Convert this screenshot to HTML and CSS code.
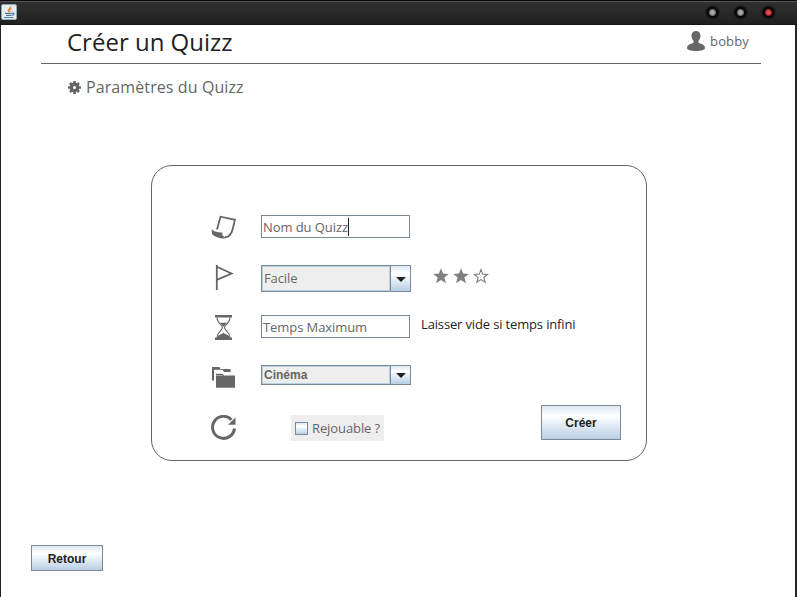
FILE: index.html
```html
<!DOCTYPE html>
<html lang="fr">
<head>
<meta charset="utf-8">
<title>Quizz</title>
<link rel="stylesheet" href="styles.css">
</head>
<body>
<div class="window">
  <div class="titlebar">
    <svg class="java" width="16" height="16" viewBox="0 0 16 16">
      <rect x=".5" y=".5" width="15" height="15" rx="1.5" fill="#e6edf1" stroke="#8fa9b9"/>
      <path d="M9.8 2.2C10.3 4 6 4.700 7.600 8M10.500 4.300C7.500 5.600 9.800 6.500 8.300 8.200" fill="none" stroke="#ee8630" stroke-width="1.200"/>
      <path d="M4 9.300H11M5 11.300H10.500M3 13.500H12.500M11 9.300c3-1 2.500 1.700 0 2" fill="none" stroke="#547d9c" stroke-width="1.200"/>
    </svg>
    <div class="controls"><i class="orb"></i><i class="orb"></i><i class="orb close"></i></div>
  </div>
  <main class="content">
    <header class="header">
      <h1>Créer un Quizz</h1>
      <div class="user">
        <svg width="18" height="20" viewBox="0 0 18 20"><path fill="#666" d="M9 0c3 0 4.700 2 4.500 5-.2 2.500-1.200 3.700-2 5-.5 1.500 0 2 1.500 2.400 3.500.8 5 2 5 4.600 0 2-4 3-9 3s-9-1-9-3c0-2.600 1.500-3.800 5-4.600 1.500-.4 2-.9 1.500-2.400-.8-1.300-1.800-2.500-2-5C4.300 2 6 0 9 0z"/></svg>
        <span>bobby</span>
      </div>
    </header>
    <h2>
      <svg width="13" height="13" viewBox="-6.500 -6.500 13 13"><g fill="none" stroke="#666"><circle r="3.200" stroke-width="3.400"/><path stroke-width="2.600" d="M0-6.500V-4M0 6.500V4M-6.500 0H-4M6.500 0H4M-4.500-4.500-3-3M4.500 4.500 3 3M-4.500 4.500-3 3M4.500-4.500 3-3"/></g></svg>
      <span>Paramètres du Quizz</span>
    </h2>
    <form class="card">
      <div class="row">
        <svg class="icon" width="26" height="26" viewBox="0 0 26 26"><path d="M6 14.500 9.500 1.700 24 4.800 21.700 14Q19.500 22.500 14 22" fill="none" stroke="#666" stroke-width="1.800"/><path fill="#666" d="M.5 14.200C4 17 7 17.300 11.500 17.500c-.8 2.800.8 4.500 3.500 4.500v1.300c-5 .6-11-.8-14-4.300z"/></svg>
        <div class="field">Nom du Quizz<span class="caret"></span></div>
      </div>
      <div class="row">
        <svg class="icon" width="26" height="26" viewBox="0 0 26 26"><path d="M5.800 0V25M5.800 1.800 20.500 8.500 5.800 14.800" fill="none" stroke="#666" stroke-width="1.800"/></svg>
        <div class="select tall"><span class="value">Facile</span><span class="arrow"></span></div>
        <div class="stars">
          <svg width="16" height="16" viewBox="0 0 16 16"><path fill="#808080" d="M8 .3 10.100 5.600 15.800 6 11.400 9.600 12.900 15.200 8 12.100 3.100 15.200 4.600 9.600.2 6 5.900 5.600z"/></svg>
          <svg width="16" height="16" viewBox="0 0 16 16"><path fill="#808080" d="M8 .3 10.100 5.600 15.800 6 11.400 9.600 12.900 15.200 8 12.100 3.100 15.200 4.600 9.600.2 6 5.900 5.600z"/></svg>
          <svg width="16" height="16" viewBox="0 0 16 16"><path fill="none" stroke="#808080" stroke-width="1.100" d="M8 1.500 9.700 6.100 14.700 6.400 10.800 9.500 12.200 14.300 8 11.600 3.800 14.300 5.200 9.500 1.300 6.400 6.300 6.100z"/></svg>
        </div>
      </div>
      <div class="row">
        <svg class="icon" width="26" height="26" viewBox="0 0 26 26"><path fill="#666" d="M4 0H21V2.500H4zM4 22.500H21V25H4zM6 22.500c.5-2.500 4-2.500 6.500-4.800 2.500 2.300 6 2.300 6.500 4.800zM8.800 7.700h7.400L12.500 11.800z"/><path fill="none" stroke="#666" stroke-width="1.100" d="M6 2.500C6 8.500 11.500 9.500 11.500 12.500S6 17.500 6 22.500M19 2.500C19 8.500 13.500 9.500 13.500 12.500S19 17.500 19 22.500"/></svg>
        <div class="field">Temps Maximum</div>
        <span class="hint">Laisser vide si temps infini</span>
      </div>
      <div class="row">
        <svg class="icon" width="26" height="26" viewBox="0 0 26 26"><path fill="#666" d="M1 2H8.500L9.500 4H19.500V7H13L11.500 4.700H3V15.500H1zM5 8.500H11.500L13 10.500H24V22.700H5z"/><path d="M5 10.500H11.500" stroke="#ccc" stroke-width=".6"/><path d="M3.500 8H11.800L13 9.500H24" stroke="#fff" fill="none" stroke-width="1"/></svg>
        <div class="select short"><span class="value">Cinéma</span><span class="arrow"></span></div>
      </div>
      <div class="row">
        <svg class="icon" width="26" height="26" viewBox="0 0 26 26"><path d="M20.500 4.700A11 11 0 1 0 23.500 13.500" fill="none" stroke="#666" stroke-width="3"/><path fill="#666" d="M24.500 2.500V9.700H17z"/></svg>
        <label class="check"><span class="box"></span>Rejouable ?</label>
        <button type="button" class="button create">Créer</button>
      </div>
    </form>
    <button type="button" class="button back">Retour</button>
  </main>
</div>
</body>
</html>
```
FILE: styles.css
```css
* { box-sizing: border-box; }
body { margin: 0; background: #252525; font: 13px/18px "Open Sans", sans-serif; color: #666; }
.window { width: 797px; height: 597px; overflow: hidden; display: flex; flex-direction: column; }
.titlebar { height: 25px; flex: none; display: flex; justify-content: space-between; padding: 4px 21px 0 1px; background: linear-gradient(#090909 0 1px, #555 1px 2px, #303030 2px, #202020 24px, #151515 24px); }
.java { display: block; }
.controls { display: flex; gap: 13px; padding-top: 1px; }
.orb { width: 15px; height: 15px; border-radius: 50%; background: radial-gradient(circle at 50% 50%, #aaa 0 1.5px, #707070 3px, #080808 4px 5px, #242424 7.5px); }
.close { background: radial-gradient(circle at 50% 50%, #dc5555 0 1.5px, #a51b20 3px, #080808 4px 5px, #242424 7.5px); }
.content { flex: 1; margin: 0 2px 0 1px; background: #fff; display: flex; flex-direction: column; align-items: flex-start; }
.header { width: 720px; height: 39px; margin-left: 40px; padding: 0 12px 0 26px; border-bottom: 1px solid #666; display: flex; justify-content: space-between; }
h1 { margin: 0; font-size: 24px; line-height: 34px; font-weight: 400; color: #222; }
.user { display: flex; gap: 5px; padding-top: 6px; height: 26px; margin-right: 0; }
.user span { line-height: 20px; letter-spacing: .15px; }
h2 { margin: 11px 0 0 67px; display: flex; align-items: center; gap: 5px; height: 24px; font-size: 16px; letter-spacing: .1px; font-weight: 400; line-height: 24px; }
.card { width: 496px; height: 296px; margin: 66px 0 0 150px; padding: 49px 25px 0 59px; border: 1px solid #666; border-radius: 21px; }
.row { height: 50px; display: flex; align-items: flex-start; }
.icon { flex: none; margin-right: 24px; }
.field { width: 149px; height: 23px; border: 1px solid #7a8a99; padding: 2px 1px; line-height: 18px; letter-spacing: -.08px; white-space: nowrap; display: flex; }
.caret { width: 1px; height: 18px; background: #222; }
.select { width: 150px; border: 1px solid #7a8a99; display: flex; }
.value { flex: 1; border: 1px solid #b8cfe5; background: #eee; padding-left: 1px; }
.arrow { width: 20px; border-left: 1px solid #7a8a99; background: linear-gradient(#dde8f3, #fff 30%, #b8cfe5); display: flex; align-items: center; justify-content: center; }
.arrow::before { content: ""; border: 5px solid transparent; border-top-color: #222; border-bottom: 0; margin-top: 1px; }
.tall { height: 27px; line-height: 23px; letter-spacing: -.1px; }
.short { height: 20px; font: bold 12px/16px "Liberation Sans", sans-serif; }
.stars { display: flex; gap: 4px; margin: 3px 0 0 22px; }
.hint { margin-left: 11px; color: #222; letter-spacing: -.15px; }
.check { margin-left: 30px; width: 93px; height: 26px; background: #eee; display: flex; align-items: center; gap: 4px; padding-left: 4px; letter-spacing: -.1px; white-space: nowrap; }
.box { width: 13px; height: 13px; border: 1px solid #7a8a99; background: linear-gradient(#dde8f3, #fff 30%, #b8cfe5); }
.button { border: 1px solid #7a8a99; border-radius: 0; padding: 0; background: linear-gradient(#dde8f3, #fff 30%, #b8cfe5); color: #222; font: bold 12px/16px "Liberation Sans", sans-serif; }
.create { width: 80px; height: 35px; margin: -10px 0 0 auto; }
.back { width: 72px; height: 26px; margin: 84px 0 0 30px; padding-top: 1px; }
```
